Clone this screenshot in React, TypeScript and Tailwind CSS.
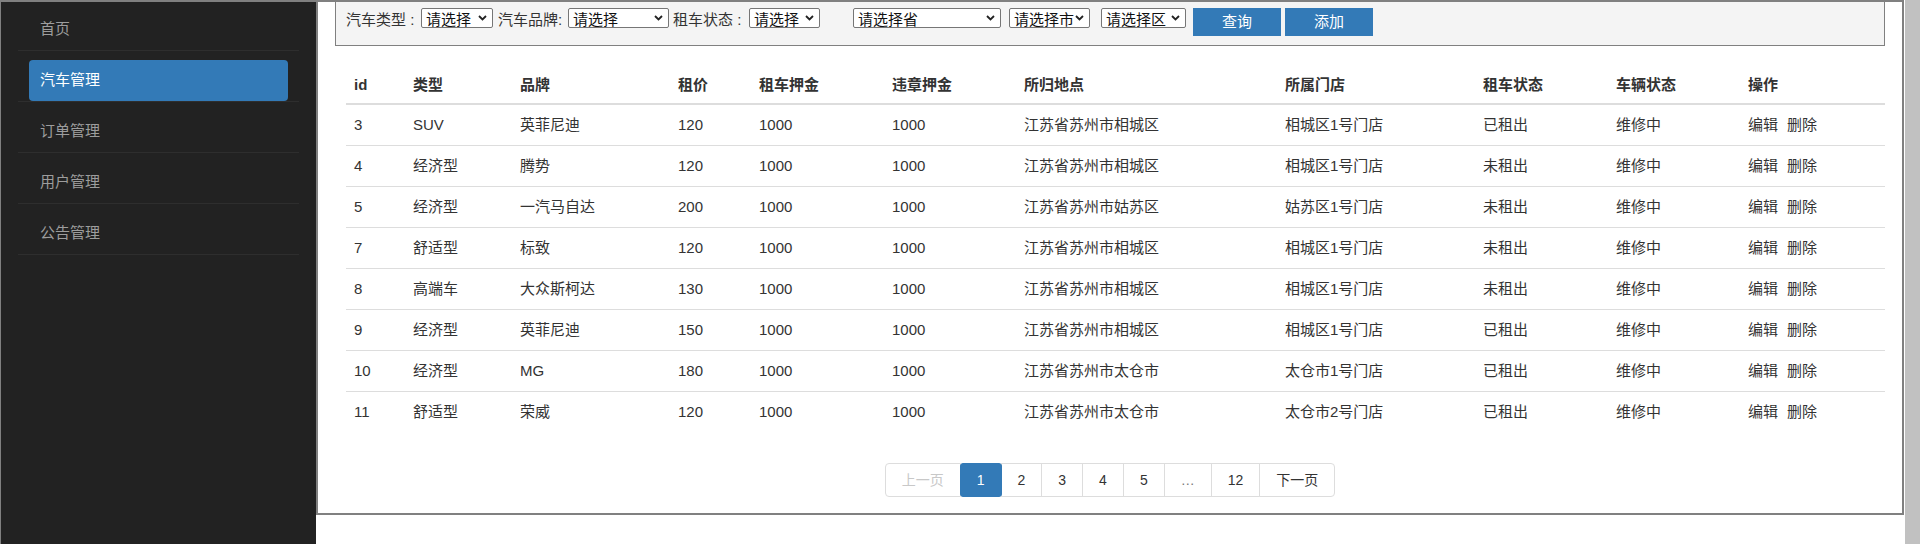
import React from "react";

type Car = {
  id: number;
  type: string;
  brand: string;
  price: number;
  deposit: number;
  violation: number;
  location: string;
  store: string;
  rent: string;
  status: string;
};

const cars: Car[] = [
  { id: 3, type: "SUV", brand: "英菲尼迪", price: 120, deposit: 1000, violation: 1000, location: "江苏省苏州市相城区", store: "相城区1号门店", rent: "已租出", status: "维修中" },
  { id: 4, type: "经济型", brand: "腾势", price: 120, deposit: 1000, violation: 1000, location: "江苏省苏州市相城区", store: "相城区1号门店", rent: "未租出", status: "维修中" },
  { id: 5, type: "经济型", brand: "一汽马自达", price: 200, deposit: 1000, violation: 1000, location: "江苏省苏州市姑苏区", store: "姑苏区1号门店", rent: "未租出", status: "维修中" },
  { id: 7, type: "舒适型", brand: "标致", price: 120, deposit: 1000, violation: 1000, location: "江苏省苏州市相城区", store: "相城区1号门店", rent: "未租出", status: "维修中" },
  { id: 8, type: "高端车", brand: "大众斯柯达", price: 130, deposit: 1000, violation: 1000, location: "江苏省苏州市相城区", store: "相城区1号门店", rent: "未租出", status: "维修中" },
  { id: 9, type: "经济型", brand: "英菲尼迪", price: 150, deposit: 1000, violation: 1000, location: "江苏省苏州市相城区", store: "相城区1号门店", rent: "已租出", status: "维修中" },
  { id: 10, type: "经济型", brand: "MG", price: 180, deposit: 1000, violation: 1000, location: "江苏省苏州市太仓市", store: "太仓市1号门店", rent: "已租出", status: "维修中" },
  { id: 11, type: "舒适型", brand: "荣威", price: 120, deposit: 1000, violation: 1000, location: "江苏省苏州市太仓市", store: "太仓市2号门店", rent: "已租出", status: "维修中" },
];

const menu = ["首页", "汽车管理", "订单管理", "用户管理", "公告管理"];
const headers = ["id", "类型", "品牌", "租价", "租车押金", "违章押金", "所归地点", "所属门店", "租车状态", "车辆状态", "操作"];
const widths = [59, 107, 158, 81, 133, 132, 261, 198, 133, 132, 145];

function Select({ text, className }: { text: string; className: string }) {
  return (
    <div className={`h-[20px] flex items-center justify-between border border-[#767676] rounded-[2px] bg-white pl-[4px] pr-[5px] text-[15px] leading-none text-[#111] ${className}`}>
      <span className="pt-[2px]">{text}</span>
      <svg width="9" height="6" viewBox="0 0 9 6" className="shrink-0">
        <path d="M1 1 L4.5 4.5 L8 1" fill="none" stroke="#222" strokeWidth="1.8" />
      </svg>
    </div>
  );
}

function Pager() {
  const items = ["上一页", "1", "2", "3", "4", "5", "…", "12", "下一页"];
  return (
    <div className="flex justify-center mt-[31px]">
      <div className="flex text-[14px] leading-[20px]">
        {items.map((p, i) => {
          let cls = "border border-[#ddd] py-[6px] px-[16px] text-[#333] bg-white -ml-px";
          if (i === 0) cls = "border border-[#ddd] py-[6px] px-[16px] text-[#c8c8c8] bg-white rounded-l-[4px]";
          if (p === "1") cls = "border border-[#337ab7] py-[6px] px-[16px] text-white bg-[#337ab7] rounded-[3px] -ml-px relative";
          if (p === "…") cls = "border border-[#ddd] py-[6px] px-[16px] text-[#777] bg-white -ml-px";
          if (i === items.length - 1) cls = "border border-[#ddd] py-[6px] px-[16px] text-[#333] bg-white rounded-r-[4px] -ml-px";
          return (
            <span key={i} className={cls}>
              {p}
            </span>
          );
        })}
      </div>
    </div>
  );
}

export default function App() {
  return (
    <div className="flex w-[1920px] h-[544px] bg-white font-['Liberation_Sans','Noto_Sans_CJK_SC',sans-serif] overflow-hidden">
      <aside className="w-[316px] h-full shrink-0 bg-[#222] border-t-2 border-l border-[#808080]">
        <ul className="px-[17px] -mt-[2px]">
          {menu.map((m) => (
            <li key={m} className="border-b border-[#2e2e2e] pt-[9px]">
              <div
                className={`mx-[11px] h-[41px] px-[11px] flex items-center rounded-[4px] text-[15px] ${
                  m === "汽车管理" ? "bg-[#337ab7] text-white" : "text-[#9d9d9d]"
                }`}
              >
                {m}
              </div>
            </li>
          ))}
        </ul>
      </aside>

      <main className="w-[1588px] h-[515px] shrink-0 border-2 border-[#808080] flex flex-col">
        <div className="mx-[17px] h-[45px] -mt-px border border-[#808080] bg-[#f4f4f4] flex items-start pt-[6px] pl-[10px] text-[15px] text-[#333]">
          <span className="w-[75px] leading-[24px]">汽车类型 :</span>
          <Select text="请选择" className="w-[72px]" />
          <span className="w-[70px] ml-[5px] leading-[24px]">汽车品牌:</span>
          <Select text="请选择" className="w-[101px]" />
          <span className="w-[76px] ml-[4px] leading-[24px]">租车状态 :</span>
          <Select text="请选择" className="w-[71px]" />
          <Select text="请选择省" className="w-[148px] ml-[33px]" />
          <Select text="请选择市" className="w-[81px] ml-[8px]" />
          <Select text="请选择区" className="w-[85px] ml-[11px]" />
          <button className="w-[88px] h-[28px] ml-[7px] bg-[#337ab7] text-white text-[15px]">查询</button>
          <button className="w-[88px] h-[28px] ml-[4px] bg-[#337ab7] text-white text-[15px]">添加</button>
        </div>

        <div className="ml-[28px] mr-[17px] mt-[21px]">
          <table className="w-full table-fixed border-collapse text-[15px] text-[#333]">
            <colgroup>
              {widths.map((w, i) => (
                <col key={i} style={{ width: w }} />
              ))}
            </colgroup>
            <thead>
              <tr className="border-b-2 border-[#ddd]">
                {headers.map((h) => (
                  <th key={h} className="text-left font-bold px-[8px] py-[8px] leading-[20px]">
                    {h}
                  </th>
                ))}
              </tr>
            </thead>
            <tbody>
              {cars.map((c, i) => (
                <tr key={c.id} className={i === 0 ? "" : "border-t border-[#ddd]"}>
                  <td className="px-[8px] py-[10px] leading-[20px]">{c.id}</td>
                  <td className="px-[8px] py-[10px] leading-[20px]">{c.type}</td>
                  <td className="px-[8px] py-[10px] leading-[20px]">{c.brand}</td>
                  <td className="px-[8px] py-[10px] leading-[20px]">{c.price}</td>
                  <td className="px-[8px] py-[10px] leading-[20px]">{c.deposit}</td>
                  <td className="px-[8px] py-[10px] leading-[20px]">{c.violation}</td>
                  <td className="px-[8px] py-[10px] leading-[20px]">{c.location}</td>
                  <td className="px-[8px] py-[10px] leading-[20px]">{c.store}</td>
                  <td className="px-[8px] py-[10px] leading-[20px]">{c.rent}</td>
                  <td className="px-[8px] py-[10px] leading-[20px]">{c.status}</td>
                  <td className="px-[8px] py-[10px] leading-[20px]">
                    <span>编辑</span>
                    <span className="ml-[9px]">删除</span>
                  </td>
                </tr>
              ))}
            </tbody>
          </table>
        </div>

        <Pager />
      </main>

      <div className="w-px shrink-0 bg-white" />
      <div className="flex-1 h-full bg-[#c1c1c1]" />
    </div>
  );
}
